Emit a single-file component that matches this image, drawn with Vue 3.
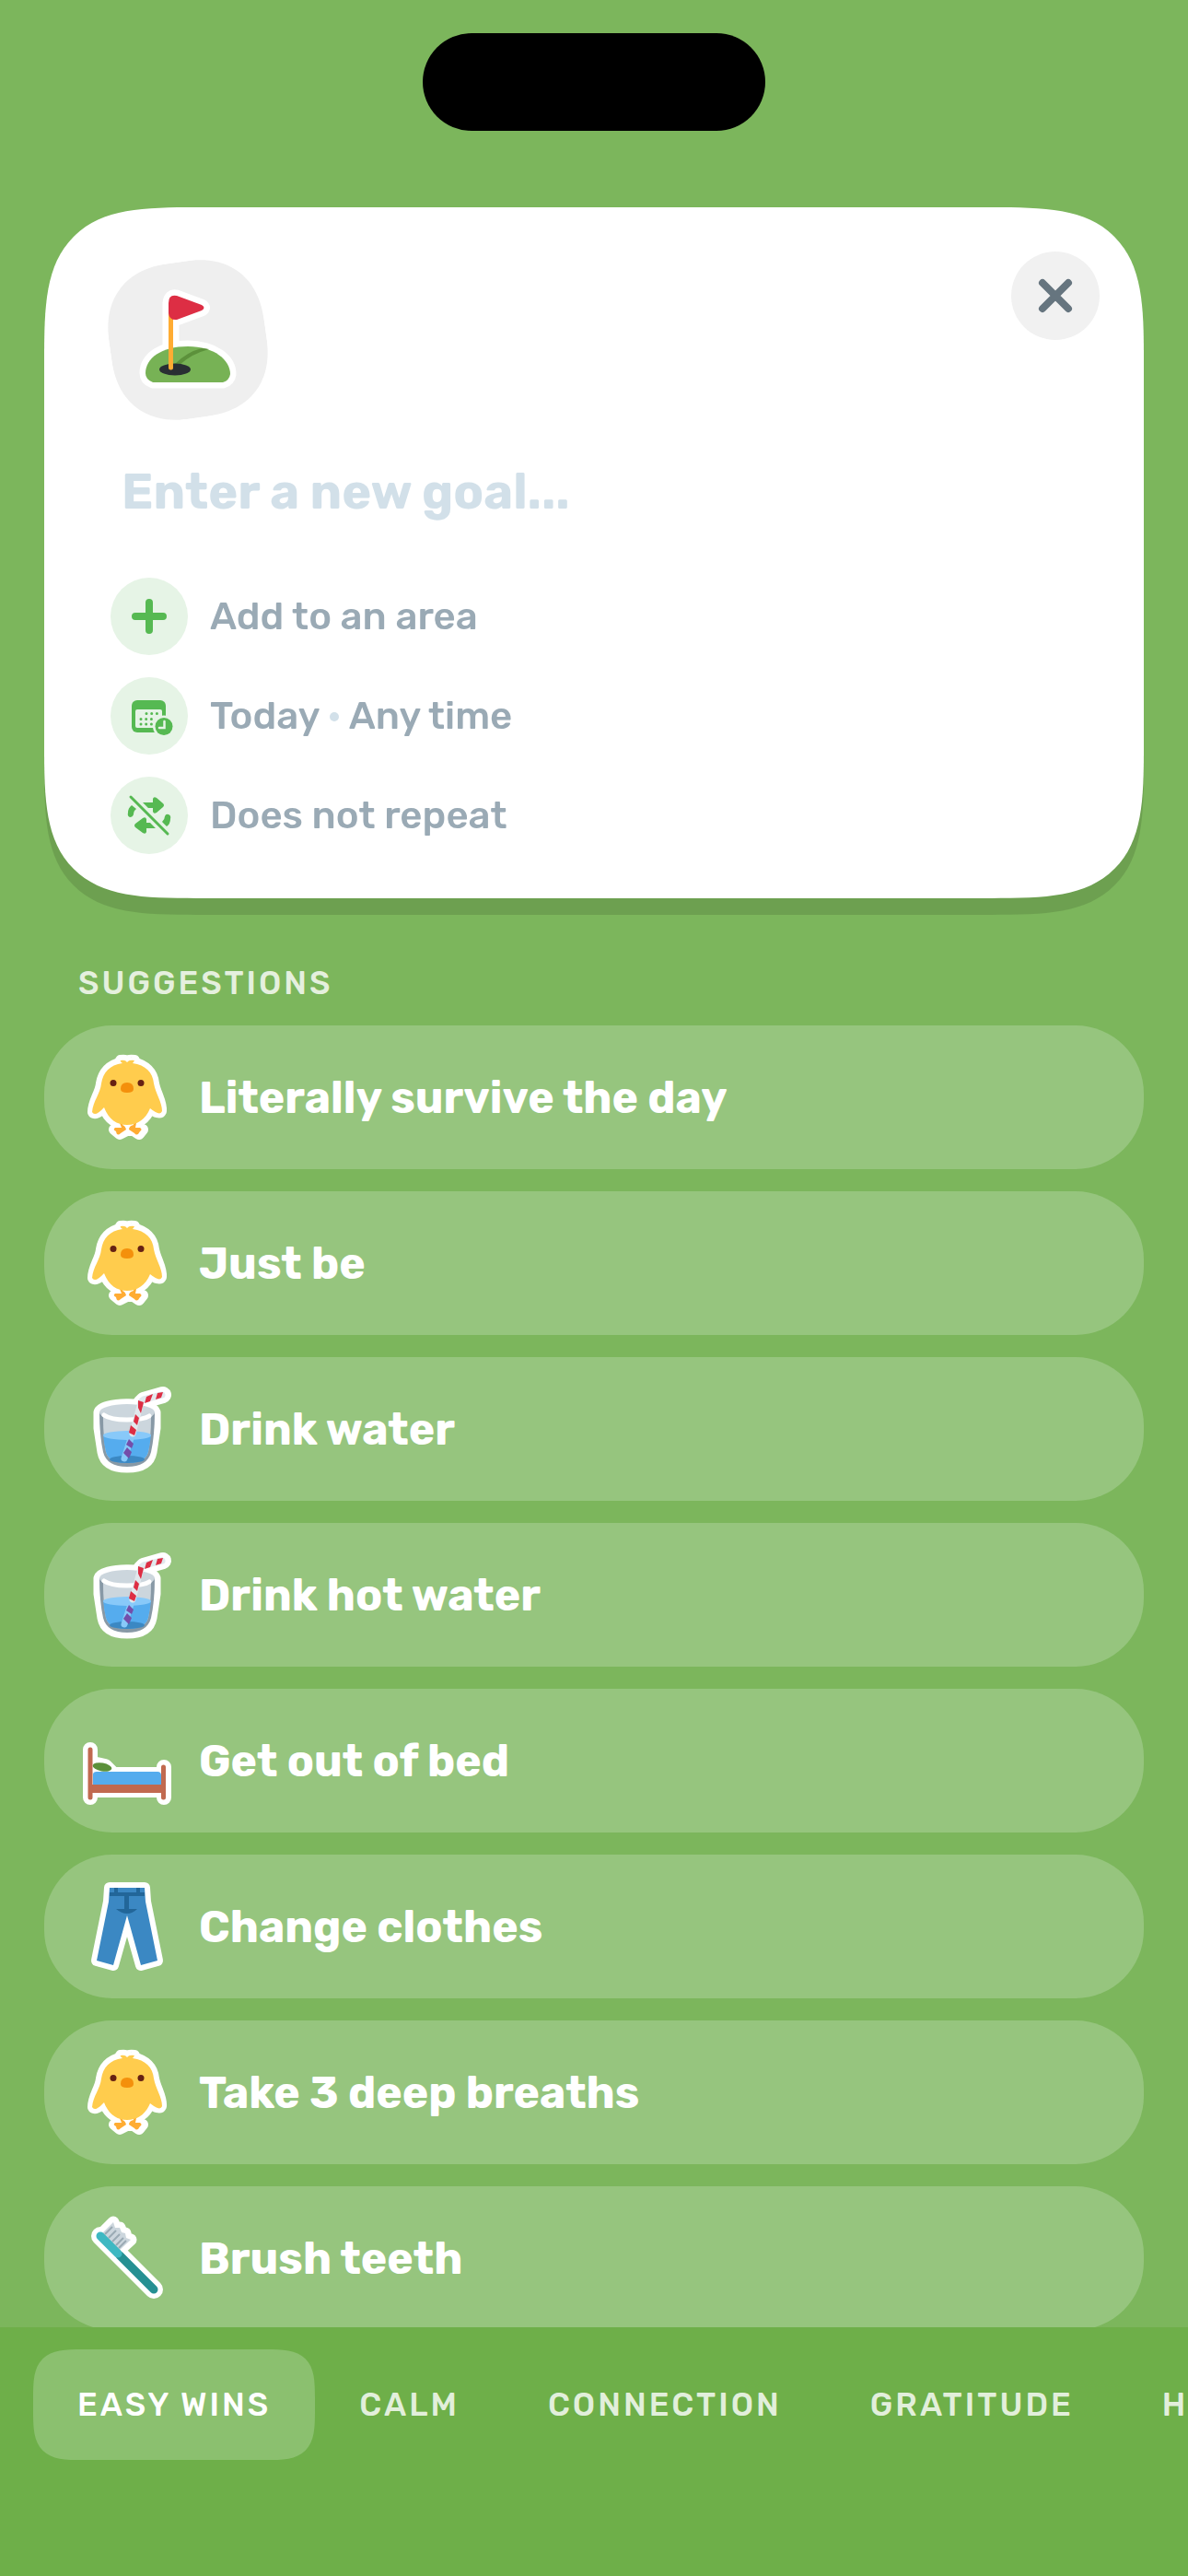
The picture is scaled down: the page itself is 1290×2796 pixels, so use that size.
<script setup>
import { ref } from 'vue'

const goal = ref('')
const activeTab = ref('Easy wins')

const suggestions = [
    { icon: 'chick', title: 'Literally survive the day' },
    { icon: 'chick', title: 'Just be' },
    { icon: 'water', title: 'Drink water' },
    { icon: 'water', title: 'Drink hot water' },
    { icon: 'bed', title: 'Get out of bed' },
    { icon: 'jeans', title: 'Change clothes' },
    { icon: 'chick', title: 'Take 3 deep breaths' },
    { icon: 'brush', title: 'Brush teeth' }
]

const tabs = ['Easy wins', 'Calm', 'Connection', 'Gratitude', 'Health']

const pickSuggestion = (title) => {
    goal.value = title
}
</script>

<template>
    <div class="screen">
        <header class="status">
            <div class="island"></div>
        </header>

        <main>
            <div class="card-shadow">
                <form class="card" @submit.prevent>
                    <div class="card-top">
                        <button type="button" class="goal-icon" aria-label="Choose an icon">
                            <svg viewBox="0 0 200 200" aria-hidden="true">
                                <g fill="#fff" stroke="#fff" stroke-width="13" stroke-linejoin="round">
                                    <path d="M66 146Q58 143 58 136C58 120 75 107 104 107C133 107 150 122 150 137Q149 144 142 146Z" />
                                    <path d="M83 130V60Q84 50 92 52L119 62Q124 65 119 68L92 78L88 79V130Z" />
                                </g>
                                <path d="M66 146Q58 143 58 136C58 120 75 107 104 107C133 107 150 122 150 137Q149 144 142 146Z" fill="#77b255" />
                                <path d="M90 126Q103 113 119 109L127 110Q108 115 95 127Z" fill="#5c913b" />
                                <ellipse cx="90" cy="132" rx="17" ry="6.500" fill="#292f33" />
                                <path d="M85.500 72V130" stroke="#ffac33" stroke-width="5" stroke-linecap="round" />
                                <path d="M83 60Q83 50 92 52L119 62Q124 65 119 68L92 78Q84 79 83 71Z" fill="#dd2e44" />
                            </svg>
                        </button>
                        <button type="button" class="close" aria-label="Close">
                            <svg viewBox="0 0 96 96" aria-hidden="true">
                                <path d="M34 34L62 62M62 34L34 62" stroke="#66757f" stroke-width="8" stroke-linecap="round" />
                            </svg>
                        </button>
                    </div>

                    <input v-model="goal" class="goal-input" type="text" placeholder="Enter a new goal..." aria-label="Enter a new goal">

                    <div class="options">
                        <button type="button" class="option">
                            <svg viewBox="0 0 84 84" aria-hidden="true">
                                <circle cx="42" cy="42" r="42" fill="#e6f4e6" />
                                <path d="M42 27V57M27 42H57" stroke="#56b952" stroke-width="8" stroke-linecap="round" />
                            </svg>
                            <span>Add to an area</span>
                        </button>
                        <button type="button" class="option">
                            <svg viewBox="0 0 84 84" aria-hidden="true">
                                <circle cx="42" cy="42" r="42" fill="#e6f4e6" />
                                <rect x="23" y="25" width="37" height="35" rx="6" fill="#56b952" />
                                <rect x="27" y="35" width="29" height="20" rx="2" fill="#e6f4e6" />
                                <path d="M39 39.500H51M33 45.500H45M33 51H45" stroke="#56b952" stroke-width="3" stroke-dasharray="0 5.700" stroke-linecap="round" />
                                <circle cx="58" cy="53.500" r="12" fill="#e6f4e6" />
                                <circle cx="58" cy="53.500" r="9.500" fill="#56b952" />
                                <path d="M58.500 48V55H53" fill="none" stroke="#e6f4e6" stroke-width="2.500" stroke-linecap="round" />
                            </svg>
                            <span>Today <i class="dot"></i> Any time</span>
                        </button>
                        <button type="button" class="option">
                            <svg viewBox="0 0 84 84" aria-hidden="true">
                                <circle cx="42" cy="42" r="42" fill="#e6f4e6" />
                                <g fill="#56b952">
                                    <path d="M35 28H46V24Q47 21 50 23L57 29Q59 31 57 33L50 39Q47 41 46 38V34H41Z" />
                                    <path d="M49 56H39V60Q38 63 35 61L27 55Q25 53 27 51L35 45Q38 43 39 46V50H43Z" />
                                    <path d="M23 31L28 35Q25 37 25 41Q24 44 21 44Q18 43 19 39Q19 34 23 31Z" />
                                    <path d="M61 54L56 49Q59 46 59 43Q60 40 63 41Q66 42 65 46Q65 51 61 54Z" />
                                </g>
                                <path d="M22 22L62 62" stroke="#56b952" stroke-width="3" stroke-linecap="round" />
                            </svg>
                            <span>Does not repeat</span>
                        </button>
                    </div>
                </form>
            </div>

            <h2>Suggestions</h2>
            <ul class="suggestions">
                <li v-for="(item, index) in suggestions" :key="index">
                    <button type="button" class="suggestion" @click="pickSuggestion(item.title)">
                        <svg v-if="item.icon === 'chick'" viewBox="0 1 120 120" aria-hidden="true">
                            <g fill="#fff" stroke="#fff" stroke-width="12" stroke-linejoin="round" stroke-linecap="round">
                                <path d="M30 46C32 34 39 26 53 23Q50 22 51 21Q56 20 58 22Q60 20 66 21Q65 23 64 23C78 26 86 34 87 46C89 57 96 66 95 76Q93 80 83 73C78 85 69 90 58 90C47 90 38 85 33 72Q23 81 21 77C21 65 29 57 30 46Z" />
                                <path d="M50 89L52 93L44 96L50 101L58 97L65 97L71 101L75 96L67 92V89Z" />
                            </g>
                            <path d="M50 89L52 94H45Q42 96 46 98Q47 104 51 100L57 96Q56 92 53 91V88ZM68 89L67 94H72Q75 96 72 98Q69 104 66 100L60 96Q60 92 65 91V88Z" fill="#ffac33" />
                            <path d="M30 46C32 34 39 26 53 24Q50 22 51 21Q56 20 58 23Q60 20 66 21Q65 23 64 24C78 26 86 34 87 46C89 57 96 66 96 76Q94 82 83 73C78 85 69 91 58 91C47 91 38 85 33 72Q23 83 20 77C21 65 29 57 30 46Z" fill="#ffcc4d" />
                            <circle cx="43" cy="45.500" r="3.500" fill="#662113" />
                            <circle cx="73" cy="45.500" r="3.500" fill="#662113" />
                            <path d="M51 52Q51 45 58 45Q65 45 65 52Q65 56 58 56Q51 56 51 52Z" fill="#f4900c" />
                        </svg>
                        <svg v-else-if="item.icon === 'water'" viewBox="0 1 120 120" aria-hidden="true">
                            <g fill="#fff" stroke="#fff" stroke-width="13" stroke-linejoin="round" stroke-linecap="round">
                                <path d="M28 43C30 33 84 31 88 43V60L84 86Q81 102 58 102Q35 102 32 86L28 60Z" />
                                <path d="M73 33L76 30L97 24" fill="none" stroke-width="18" />
                            </g>
                            <path d="M28 43Q28 68 32 86Q36 102 58 102Q80 102 84 86Q88 68 88 43Z" fill="#8899a6" />
                            <path d="M32 48Q32 70 35 86Q38 98 58 98Q78 98 81 86Q84 70 84 48Z" fill="#ccd6dd" />
                            <path d="M32 67Q33 78 35 86Q38 98 58 98Q78 98 81 86Q83 78 84 67Z" fill="#55acee" />
                            <ellipse cx="58" cy="68" rx="26" ry="5" fill="#88c9f9" />
                            <ellipse cx="58" cy="94" rx="19" ry="4" fill="#3b88c3" />
                            <ellipse cx="58" cy="43" rx="30" ry="9" fill="#ccd6dd" />
                            <path d="M33 46Q40 51 58 51Q76 51 82 47" fill="none" stroke="#fff" stroke-width="5" stroke-linecap="round" />
                            <path d="M63 68L55 93" stroke="#88c9f9" stroke-width="7" stroke-linecap="round" />
                            <path d="M58 81L63 86L60 93L54 87ZM60 72L65 77L63 82L57 78Z" fill="#744eaa" />
                            <path d="M64 66L73 32Q74 30 76 29L96 24" fill="none" stroke="#e1e8ed" stroke-width="7" stroke-linecap="round" stroke-linejoin="round" />
                            <path d="M70 30L76 32L73 44L70 38ZM67 45L71 49L69 57L65 53ZM62 57L68 62L66 68L60 65ZM79 26L86 23L83 31L77 33ZM91 22L97 21L95 27L89 29Z" fill="#dd2e44" />
                        </svg>
                        <svg v-else-if="item.icon === 'bed'" viewBox="0 -9 120 120" aria-hidden="true">
                            <path d="M18 39V91M18 83H98M98 58V91M25 55L34 57L43 66H92" fill="none" stroke="#fff" stroke-width="16" stroke-linecap="round" stroke-linejoin="round" />
                            <path d="M20 68H96V82H20Z" fill="#fff" />
                            <path d="M21 77V66Q21 63 25 63H91Q95 63 95 67V77Z" fill="#55acee" />
                            <path d="M16 77H98V86H16Z" fill="#c1694f" />
                            <path d="M18 39V91M97.500 58V91" stroke="#c1694f" stroke-width="5" stroke-linecap="round" />
                            <ellipse cx="31" cy="58" rx="10.500" ry="4.500" transform="rotate(10 31 58)" fill="#5c913b" />
                        </svg>
                        <svg v-else-if="item.icon === 'jeans'" viewBox="0 1 120 120" aria-hidden="true">
                            <path d="M39 19H77L78 34L91 98L73 103L58 50L43 103L25 98L38 34Z" fill="#fff" stroke="#fff" stroke-width="12" stroke-linejoin="round" />
                            <path d="M39 19H77L78 34L91 98L73 103L58 49L43 103L25 98L38 34Z" fill="#3b88c3" />
                            <path d="M39 24H44V19H48V24H68V19H72V24H77V28H60V42H69Q64 47 58 47Q52 47 46 42H55V28H39Z" fill="#226699" />
                        </svg>
                        <svg v-else viewBox="0 1 120 120" aria-hidden="true">
                            <path d="M29 37L87 95" stroke="#fff" stroke-width="20" stroke-linecap="round" />
                            <path d="M31 34L43 22L45 28L50 28L52 33L56 34L57 39L62 41L49 53Z" fill="#fff" stroke="#fff" stroke-width="13" stroke-linejoin="round" />
                            <path d="M31 34L43 22L45 28L50 28L52 33L56 34L57 39L62 41L49 53Z" fill="#ccd6dd" />
                            <path d="M34 35L42 27M38 39L46 31M42 43L50 35M46 47L54 39M49 50L57 42" stroke="#9aaab4" stroke-width="2" />
                            <path d="M50 58L87 95" stroke="#269093" stroke-width="9" stroke-linecap="round" />
                            <path d="M29 37L48 56" stroke="#3eb8c2" stroke-width="9" stroke-linecap="round" />
                        </svg>
                        <span>{{ item.title }}</span>
                    </button>
                </li>
            </ul>
        </main>

        <nav>
            <button
                v-for="tab in tabs"
                :key="tab"
                type="button"
                class="tab"
                :class="{ active: tab === activeTab }"
                @click="activeTab = tab"
            >{{ tab }}</button>
        </nav>
    </div>
</template>

<style>
html,
body,
#app {
    height: 100%;
}
</style>

<style scoped>
.screen {
    height: 100%;
    display: flex;
    flex-direction: column;
    overflow: hidden;
    background: #7cb65c;
    color: white;
    font-family: Rubik, Roboto, sans-serif;
}

button,
input {
    border: none;
    padding: 0;
    background: none;
    color: inherit;
    font-family: inherit;
}

svg {
    display: block;
    flex: none;
}

.status {
    flex: none;
    display: flex;
    justify-content: center;
    padding: 36px 0 83px;
}

.island {
    width: 372px;
    height: 106px;
    border-radius: 53px;
    background: black;
}

main {
    flex: 1;
    min-height: 0;
    overflow: hidden;
    padding: 0 48px;
}

.card-shadow {
    filter: drop-shadow(0 18px 0 #6da050);
}

.card {
    padding: 48px 48px 48px 72px;
    border-radius: 116px;
    background: white;
}

.card-top {
    display: flex;
    justify-content: space-between;
    align-items: flex-start;
}

.goal-icon {
    position: relative;
    width: 168px;
    height: 168px;
    margin-top: 12px;
}

.goal-icon::before {
    content: '';
    position: absolute;
    inset: -1px;
    border-radius: 64px;
    background: #efefef;
    transform: rotate(-8deg);
}

.goal-icon svg {
    position: absolute;
    top: -16px;
    left: -20px;
    width: 200px;
    height: 200px;
}

.close {
    width: 96px;
    height: 96px;
    border-radius: 50%;
    background: #f1f1f1;
}

.goal-input {
    display: block;
    width: 100%;
    height: 72px;
    margin: 45px 0 57px;
    padding: 0 12px;
    box-sizing: border-box;
    color: #66757f;
    font-size: 54px;
    font-weight: 700;
    outline: none;
}

.goal-input::placeholder {
    color: #d2e0e9;
    opacity: 1;
}

.options {
    display: flex;
    flex-direction: column;
    align-items: flex-start;
    gap: 24px;
}

.option {
    display: flex;
    align-items: center;
    gap: 24px;
    color: #9aaab5;
    font-size: 42px;
    font-weight: 500;
}

.option svg {
    width: 84px;
    height: 84px;
}

.dot {
    display: inline-block;
    width: 10px;
    height: 10px;
    margin: 0 2px;
    border-radius: 50%;
    background: #d2e0e9;
    vertical-align: 8px;
}

h2 {
    margin: 70px 37px 23px;
    color: #e5f0de;
    font-size: 35px;
    font-weight: 500;
    line-height: 45px;
    letter-spacing: 3px;
    text-transform: uppercase;
}

.suggestions {
    display: flex;
    flex-direction: column;
    gap: 24px;
    margin: 0;
    padding: 0;
    list-style: none;
}

.suggestion {
    display: flex;
    align-items: center;
    gap: 16px;
    width: 100%;
    height: 156px;
    padding: 0 32px;
    border-radius: 74px;
    background: #96c57e;
    font-size: 48px;
    font-weight: 700;
}

.suggestion svg {
    width: 120px;
    height: 120px;
}

nav {
    flex: none;
    display: flex;
    padding: 24px 36px 126px;
    overflow: hidden;
    background: #6eaf49;
}

.tab {
    flex: none;
    height: 120px;
    padding: 0 48px 1px;
    border-radius: 36px;
    color: #e2efdb;
    font-size: 35px;
    font-weight: 500;
    letter-spacing: 3px;
    text-transform: uppercase;
}

.tab.active {
    background: #8bc06f;
    color: white;
}

/* smoother corners where the browser can draw them */
@supports (corner-shape: squircle) {
    .card {
        border-radius: 166px;
        corner-shape: superellipse(1.7);
    }

    .goal-icon::before {
        border-radius: 76px;
        corner-shape: superellipse(1.2);
    }

    .tab {
        border-radius: 54px;
        corner-shape: superellipse(1.7);
    }
}
</style>
